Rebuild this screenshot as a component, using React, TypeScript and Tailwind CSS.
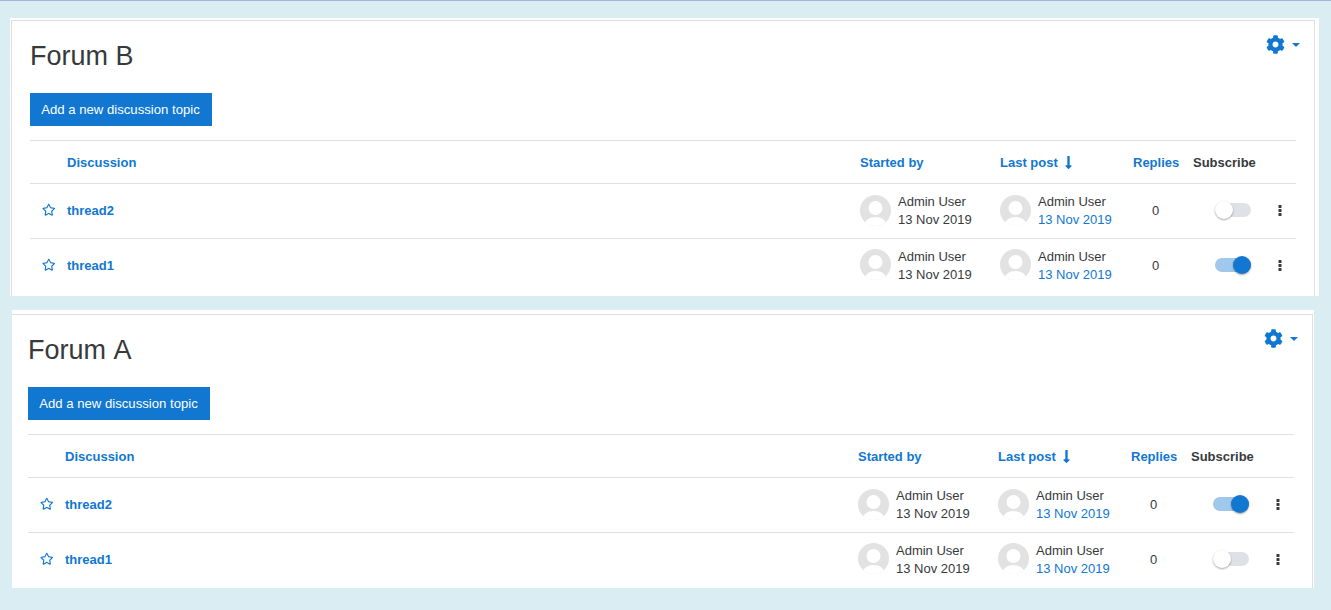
import React from "react";
import { FaCog, FaLongArrowAltDown, FaRegStar } from "react-icons/fa";

function Avatar({ className }: { className: string }) {
  return (
    <svg viewBox="0 0 31 31" className={`w-[31px] h-[31px] shrink-0 ${className}`}>
      <defs>
        <clipPath id="avatar-clip">
          <circle cx="15.5" cy="15.5" r="15.5" />
        </clipPath>
      </defs>
      <g clipPath="url(#avatar-clip)">
        <rect width="31" height="31" fill="#e2e2e2" />
        <circle cx="15.5" cy="13" r="7" fill="#fff" />
        <path d="M4 31c1-6 5.500-9 11.500-9S26 25 27 31z" fill="#fff" />
      </g>
    </svg>
  );
}

function Toggle({ on }: { on: boolean }) {
  return (
    <div className={`relative w-9 h-3.5 rounded-full ${on ? "bg-[#9fc8ec]" : "bg-[#dee2e6]"}`}>
      <div
        className={`absolute top-[-2px] w-[18px] h-[18px] rounded-full shadow-[0_1px_2px_rgba(0,0,0,0.35)] ${
          on ? "right-0 bg-[#1177d1]" : "left-0 bg-white"
        }`}
      />
    </div>
  );
}

function MenuDots() {
  return (
    <svg viewBox="0 0 4 11" className="ml-[27px] w-1 h-[11px] text-[#373a3c]">
      <rect x="0.5" y="0" width="3" height="3" rx="0.6" fill="currentColor" />
      <rect x="0.5" y="4" width="3" height="3" rx="0.6" fill="currentColor" />
      <rect x="0.5" y="8" width="3" height="3" rx="0.6" fill="currentColor" />
    </svg>
  );
}

function ThreadRow({ name, subscribed, last }: { name: string; subscribed: boolean; last: boolean }) {
  const avatarShift = last ? "mb-[4px]" : "mb-[2px]";
  return (
    <div className="grid grid-cols-[37px_1fr_140px_133px_60px_103px] items-center h-[55px] border-t border-[#dee2e6] text-[13px] leading-[18px] text-[#373a3c]">
      <FaRegStar className="ml-3 mb-[2px] text-[13.5px] text-[#1177d1]" />
      <a className="font-bold text-[#1177d1]">{name}</a>
      <div className="flex items-center gap-[7px]">
        <Avatar className={avatarShift} />
        <div>
          <div>Admin User</div>
          <div>13 Nov 2019</div>
        </div>
      </div>
      <div className="flex items-center gap-[7px]">
        <Avatar className={avatarShift} />
        <div>
          <div>Admin User</div>
          <a className="block text-[#1177d1]">13 Nov 2019</a>
        </div>
      </div>
      <div className="pl-[19px]">0</div>
      <div className="flex items-center pl-[22px] mb-[2px]">
        <Toggle on={subscribed} />
        <MenuDots />
      </div>
    </div>
  );
}

function ForumCard({
  title,
  rows,
  outer,
  inner,
}: {
  title: string;
  rows: { name: string; subscribed: boolean }[];
  outer: string;
  inner: string;
}) {
  return (
    <section className={`bg-white ${outer}`}>
      <div className={`relative h-full border-[#dedede] ${inner}`}>
        <div className="absolute top-[14px] right-[14px] flex items-center gap-[7px] text-[#1177d1]">
          <FaCog className="text-[19px]" />
          <span className="w-0 h-0 border-x-4 border-x-transparent border-t-4 border-t-[#1177d1]" />
        </div>
        <h2 className="pt-[19px] text-[27px] leading-[32px] text-[#373a3c]">{title}</h2>
        <button className="block mt-[21px] h-[33px] w-[182px] pr-[1px] bg-[#1177d1] text-[13.15px] text-white">
          Add a new discussion topic
        </button>
        <div className="mt-[14px] mr-[18px]">
          <div className="grid grid-cols-[37px_1fr_140px_133px_60px_103px] items-center h-[43px] pt-[2px] border-t border-[#dee2e6] text-[13px] font-bold text-[#1177d1]">
            <span />
            <span>Discussion</span>
            <span>Started by</span>
            <span className="flex items-center gap-[3px]">
              Last post
              <FaLongArrowAltDown className="mb-[2px] text-[15px]" />
            </span>
            <span>Replies</span>
            <span className="text-[#373a3c]">Subscribe</span>
          </div>
          {rows.map((row, i) => (
            <ThreadRow key={row.name} name={row.name} subscribed={row.subscribed} last={i === rows.length - 1} />
          ))}
        </div>
      </div>
    </section>
  );
}

export default function App() {
  return (
    <div className="min-h-[610px] bg-[#daedf3] border-t border-[#9db8d6] font-['Liberation_Sans',sans-serif] [font-kerning:none]">
      <ForumCard
        title="Forum B"
        outer="ml-[10px] mt-[17px] w-[1309px] h-[278px] pt-[2px] pl-[1px]"
        inner="border-t border-l border-r mr-[4px] pl-[18px]"
        rows={[
          { name: "thread2", subscribed: false },
          { name: "thread1", subscribed: true },
        ]}
      />
      <ForumCard
        title="Forum A"
        outer="ml-[12px] mt-[14px] w-[1302px] h-[278px] pt-[4px]"
        inner="border-t border-r mr-[1px] pl-[16px]"
        rows={[
          { name: "thread2", subscribed: true },
          { name: "thread1", subscribed: false },
        ]}
      />
    </div>
  );
}
